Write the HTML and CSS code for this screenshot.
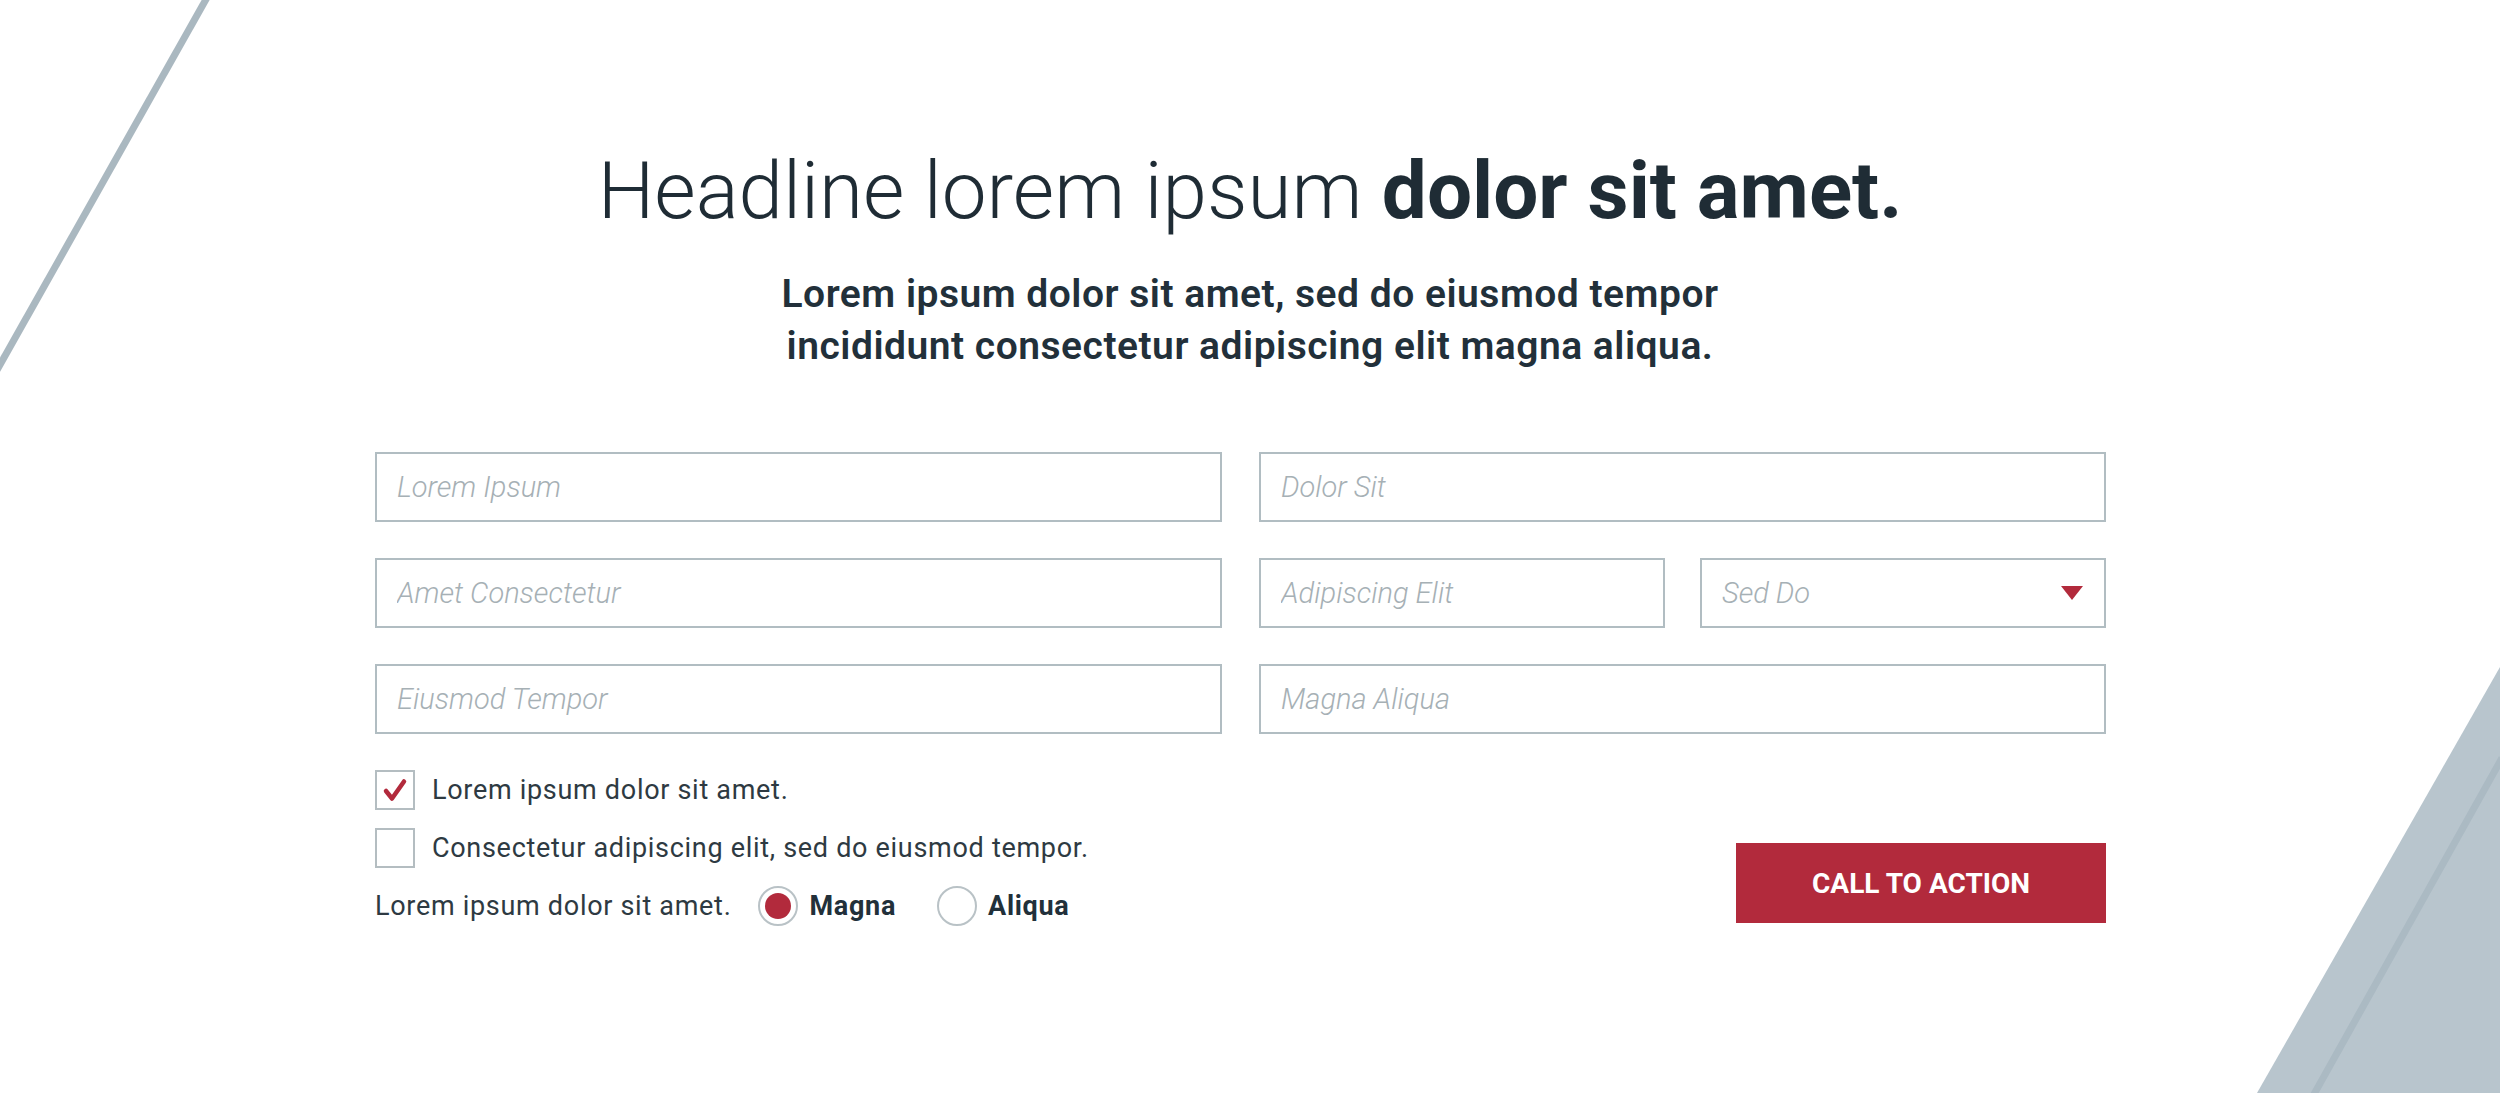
FILE: index.html
```html
<!DOCTYPE html>
<html lang="en">
<head>
    <meta charset="UTF-8">
    <meta name="viewport" content="width=device-width, initial-scale=1.0">
    <title>Headline lorem ipsum</title>
    <link rel="stylesheet" href="styles.css">
</head>
<body>
    <!-- decorative slashes behind the form -->
    <svg class="backdrop" width="2500" height="1093" viewBox="0 0 2500 1093" aria-hidden="true">
        <line x1="209" y1="-6" x2="-3" y2="370" stroke="#aab8c0" stroke-width="7"/>
        <polygon points="2500,667 2500,1093 2257,1093" fill="#b8c5cd"/>
        <line x1="2313" y1="1096" x2="2502" y2="758" stroke="#abbac3" stroke-width="7"/>
    </svg>

    <main class="signup">
        <header class="intro">
            <h1>Headline lorem ipsum <strong>dolor sit amet.</strong></h1>
            <p>Lorem ipsum dolor sit amet, sed do eiusmod tempor<br>incididunt consectetur adipiscing elit magna aliqua.</p>
        </header>

        <form class="lead-form" onsubmit="return false">
            <div class="fields">
                <input type="text" placeholder="Lorem Ipsum">
                <input type="text" placeholder="Dolor Sit">
                <input type="text" placeholder="Amet Consectetur">
                <div class="split">
                    <input type="text" placeholder="Adipiscing Elit">
                    <div class="select">
                        <span>Sed Do</span>
                        <svg class="caret" width="22" height="14" viewBox="0 0 22 14"><polygon points="0,0 22,0 11,14" fill="#b22a3c"/></svg>
                    </div>
                </div>
                <input type="text" placeholder="Eiusmod Tempor">
                <input type="text" placeholder="Magna Aliqua">
            </div>

            <div class="form-foot">
                <div class="options">
                    <label class="check">
                        <span class="box">
                            <svg width="40" height="40" viewBox="0 0 40 40"><path d="M11 21 L17 28.5 L29 11.5" fill="none" stroke="#b22a3c" stroke-width="4.5" stroke-linecap="round" stroke-linejoin="round"/></svg>
                        </span>
                        Lorem ipsum dolor sit amet.
                    </label>
                    <label class="check">
                        <span class="box"></span>
                        Consectetur adipiscing elit, sed do eiusmod tempor.
                    </label>
                    <div class="radios">
                        <span class="radio-label">Lorem ipsum dolor sit amet.</span>
                        <label class="radio"><span class="dot on"></span>Magna</label>
                        <label class="radio"><span class="dot"></span>Aliqua</label>
                    </div>
                </div>
                <button class="cta" type="submit">CALL TO ACTION</button>
            </div>
        </form>
    </main>
</body>
</html>
```

FILE: styles.css
```css
* {
    margin: 0;
    padding: 0;
    box-sizing: border-box;
}

body {
    background: #fff;
    font-family: Roboto, "Liberation Sans", sans-serif;
    color: #25323b;
    width: 2500px;
    height: 1093px;
    position: relative;
    overflow: hidden;
}

.backdrop {
    position: absolute;
    top: 0;
    left: 0;
    z-index: 0;
}

.signup {
    position: relative;
    z-index: 1;
    padding-top: 143px;
}

.intro {
    text-align: center;
}

.intro h1 {
    font-size: 80px;
    line-height: 96px;
    font-weight: 300;
    color: #1f2c35;
}

.intro h1 strong {
    font-weight: 700;
}

.intro p {
    margin-top: 29px;
    font-size: 39px;
    line-height: 52px;
    letter-spacing: 0.5px;
    font-weight: 600;
    color: #22303a;
}

.lead-form {
    width: 1731px;
    margin: 80px 0 0 375px;
}

.fields {
    display: grid;
    grid-template-columns: 1fr 1fr;
    column-gap: 37px;
    row-gap: 36px;
}

.split {
    display: grid;
    grid-template-columns: 1fr 1fr;
    gap: 35px;
}

.fields input,
.select {
    height: 70px;
    border: 2px solid #b1bdc2;
    background: #fff;
    padding: 0 20px;
    font-family: Roboto, "Liberation Sans", sans-serif;
    font-size: 29px;
    font-style: italic;
    font-weight: 300;
    color: #25323b;
    outline: none;
    width: 100%;
}

.fields input::placeholder {
    color: #a6b0b5;
}

.select {
    display: flex;
    align-items: center;
    justify-content: space-between;
    color: #a6b0b5;
    padding-right: 21px;
}

.caret {
    display: block;
}

.form-foot {
    display: flex;
    justify-content: space-between;
    align-items: flex-end;
    margin-top: 36px;
}

.options {
    display: flex;
    flex-direction: column;
    gap: 18px;
}

.check,
.radios {
    display: flex;
    align-items: center;
    height: 40px;
    font-size: 27px;
    letter-spacing: 0.7px;
    font-weight: 400;
    color: #2e3a42;
}

.box {
    width: 40px;
    height: 40px;
    border: 2px solid #b4bdc1;
    margin-right: 17px;
    display: flex;
    align-items: center;
    justify-content: center;
    flex-shrink: 0;
}

.box svg {
    display: block;
    margin: -2px;
}

.radio-label {
    margin-right: 27px;
}

.radio {
    display: flex;
    align-items: center;
    font-weight: 700;
    color: #22303a;
    margin-right: 41px;
}

.dot {
    width: 40px;
    height: 40px;
    border: 2px solid #b9c2c6;
    border-radius: 50%;
    margin-right: 11px;
    display: flex;
    align-items: center;
    justify-content: center;
}

.dot.on::after {
    content: "";
    width: 26px;
    height: 26px;
    border-radius: 50%;
    background: #b22a3c;
}

.cta {
    width: 370px;
    height: 80px;
    margin-bottom: 3px;
    background: #b22a3c;
    border: none;
    color: #fff;
    font-family: Roboto, "Liberation Sans", sans-serif;
    font-size: 28px;
    font-weight: 700;
    cursor: pointer;
}
```
